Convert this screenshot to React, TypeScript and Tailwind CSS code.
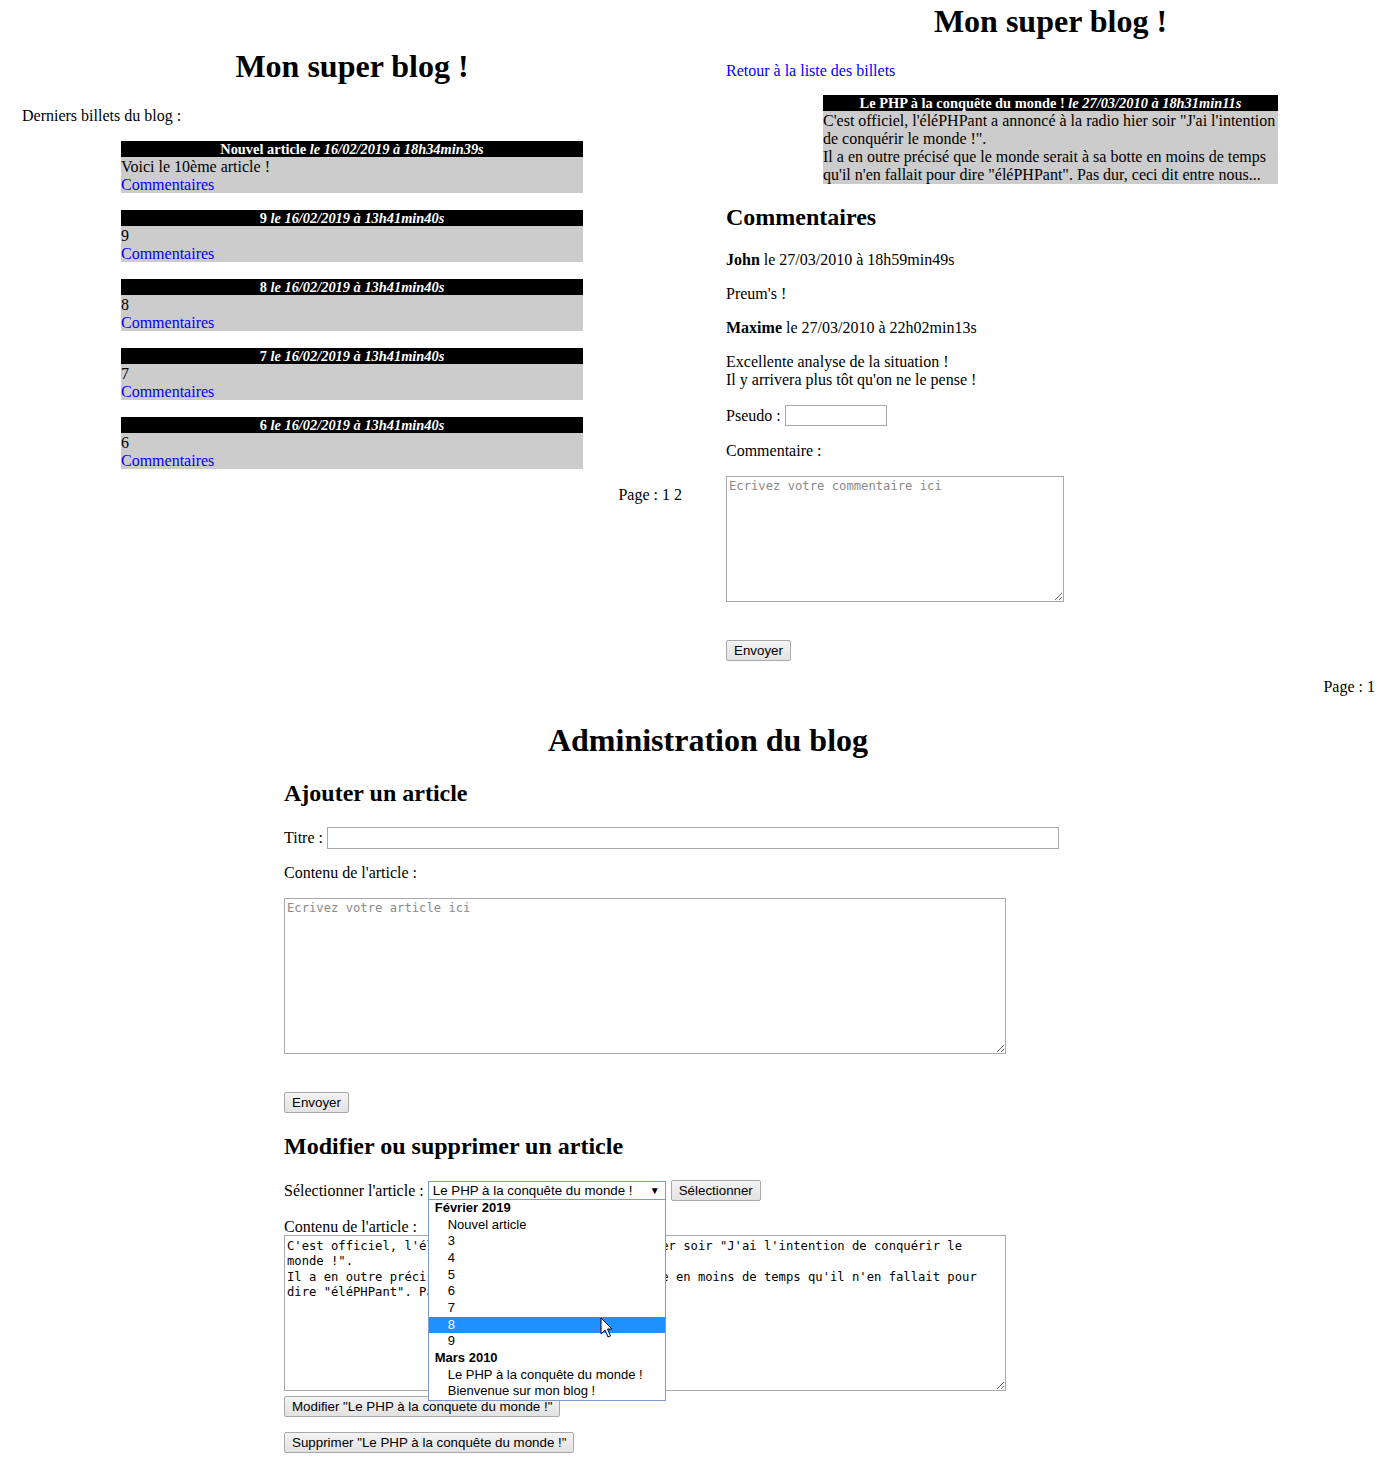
import React from 'react';

// Blog list, single article and admin pages shown side by side
const billets = [
  { title: 'Nouvel article', date: '16/02/2019 à 18h34min39s', content: 'Voici le 10ème article !' },
  { title: '9', date: '16/02/2019 à 13h41min40s', content: '9' },
  { title: '8', date: '16/02/2019 à 13h41min40s', content: '8' },
  { title: '7', date: '16/02/2019 à 13h41min40s', content: '7' },
  { title: '6', date: '16/02/2019 à 13h41min40s', content: '6' },
];

const options = [
  { label: 'Février 2019', group: true },
  { label: 'Nouvel article' },
  { label: '3' },
  { label: '4' },
  { label: '5' },
  { label: '6' },
  { label: '7' },
  { label: '8', active: true },
  { label: '9' },
  { label: 'Mars 2010', group: true },
  { label: 'Le PHP à la conquête du monde !' },
  { label: 'Bienvenue sur mon blog !' },
];

const articleText =
  'C\'est officiel, l\'éléPHPant a annoncé à la radio hier soir "J\'ai l\'intention de conquérir le\nmonde !".\nIl a en outre précisé que le monde serait à sa botte en moins de temps qu\'il n\'en fallait pour\ndire "éléPHPant". Pas dur, ceci dit entre nous...';

const btn =
  "h-[21px] px-[7px] border border-[#a9a9a9] rounded-[2px] bg-gradient-to-b from-[#f4f4f4] to-[#e2e2e2] text-[13.33px] leading-[19px] text-black font-['Liberation_Sans',Arial,sans-serif]";

const area =
  "block border border-[#a9a9a9] bg-white p-[2px] text-[12.2px] leading-[15.3px] text-black placeholder:text-[#8a8a8a] font-['DejaVu_Sans_Mono',monospace] outline-none";

function Cursor() {
  return (
    <svg className="absolute left-[172px] top-[136px]" width="13" height="21" viewBox="0 0 13 21">
      <path d="M1 1 L1 17 L5 13 L8 20 L10.5 19 L7.5 12 L12 12 Z" fill="#fff" stroke="#000" strokeWidth="1" strokeLinejoin="round" />
    </svg>
  );
}

export default function App() {
  return (
    <div className="w-[1389px] min-h-[1467px] bg-white text-black text-[16px] font-['Liberation_Serif','Times_New_Roman',serif]">
      <div className="flex">
        {/* Liste des billets */}
        <div className="w-[704px] px-[22px]">
          <h1 className="mt-[48px] text-center text-[32px] font-bold leading-[37px]">Mon super blog !</h1>
          <p className="mt-[22px] leading-[18px]">Derniers billets du blog :</p>
          <div className="mt-[16px]">
            {billets.map((b, i) => (
              <div key={i} className="mx-auto mb-[17px] w-[462px]">
                <h3 className="h-[16px] bg-black text-center text-[14.4px] font-bold leading-[16px] text-white">
                  {b.title} <em>le {b.date}</em>
                </h3>
                <div className="h-[36px] bg-[#cccccc] pt-[1px] leading-[18px]">
                  <p>{b.content}</p>
                  <a href="#" className="text-[#0000ff]">Commentaires</a>
                </div>
              </div>
            ))}
          </div>
          <p className="text-right leading-[18px]">Page : 1 2</p>
        </div>

        {/* Billet + commentaires */}
        <div className="ml-[8px] w-[677px] px-[14px]">
          <h1 className="mt-[3px] text-center text-[32px] font-bold leading-[37px]">Mon super blog !</h1>
          <p className="mt-[22px] leading-[18px]">
            <a href="#" className="text-[#0000ff]">Retour à la liste des billets</a>
          </p>
          <div className="mx-auto mt-[15px] w-[455px]">
            <h3 className="h-[16px] bg-black text-center text-[14.4px] font-bold leading-[16px] text-white">
              Le PHP à la conquête du monde ! <em>le 27/03/2010 à 18h31min11s</em>
            </h3>
            <p className="h-[73px] bg-[#cccccc] pt-[1px] leading-[18px]">
              C'est officiel, l'éléPHPant a annoncé à la radio hier soir "J'ai l'intention de conquérir le monde !".
              <br />
              Il a en outre précisé que le monde serait à sa botte en moins de temps qu'il n'en fallait pour dire
              "éléPHPant". Pas dur, ceci dit entre nous...
            </p>
          </div>
          <h2 className="mt-[19px] text-[24px] font-bold leading-[28px]">Commentaires</h2>
          <p className="mt-[20px] leading-[18px]">
            <strong>John</strong> le 27/03/2010 à 18h59min49s
          </p>
          <p className="mt-[16px] leading-[18px]">Preum's !</p>
          <p className="mt-[16px] leading-[18px]">
            <strong>Maxime</strong> le 27/03/2010 à 22h02min13s
          </p>
          <p className="mt-[16px] leading-[18px]">
            Excellente analyse de la situation !
            <br />
            Il y arrivera plus tôt qu'on ne le pense !
          </p>
          <div className="mt-[16px] flex h-[21px] items-center gap-[4px]">
            <span>Pseudo :</span>
            <input type="text" className="h-[21px] w-[102px] border border-[#a9a9a9] bg-white" />
          </div>
          <p className="mt-[16px] leading-[18px]">Commentaire :</p>
          <textarea className={`${area} mt-[16px] h-[126px] w-[338px]`} placeholder="Ecrivez votre commentaire ici" />
          <button className={`${btn} mt-[38px]`}>Envoyer</button>
          <p className="mt-[16px] text-right leading-[18px]">Page : 1</p>
        </div>
      </div>

      {/* Administration */}
      <div className="ml-[284px] w-[848px] pb-[14px]">
        <h1 className="mt-[26px] text-center text-[32px] font-bold leading-[37px]">Administration du blog</h1>
        <h2 className="mt-[20px] text-[24px] font-bold leading-[28px]">Ajouter un article</h2>
        <div className="mt-[20px] flex h-[22px] items-center gap-[4px]">
          <span>Titre :</span>
          <input type="text" className="h-[22px] w-[732px] border border-[#a9a9a9] bg-white" />
        </div>
        <p className="mt-[15px] leading-[18px]">Contenu de l'article :</p>
        <textarea className={`${area} mt-[16px] h-[156px] w-[722px]`} placeholder="Ecrivez votre article ici" />
        <button className={`${btn} mt-[38px]`}>Envoyer</button>

        <h2 className="mt-[18px] text-[24px] font-bold leading-[28px]">Modifier ou supprimer un article</h2>
        <div className="mt-[20px] flex h-[21px] items-center">
          <span className="mr-[4px]">Sélectionner l'article :</span>
          <div className="relative z-10">
            <div className="flex h-[19px] w-[238px] items-center justify-between border border-[#7a9cd3] bg-white pl-[4px] pr-[5px] text-[13.33px] font-['Liberation_Sans',Arial,sans-serif]">
              <span>Le PHP à la conquête du monde !</span>
              <span className="text-[10px]">▼</span>
            </div>
            <ul className="absolute left-0 top-[18px] w-[238px] border border-[#7a9cd3] bg-white text-[13px] font-['Liberation_Sans',Arial,sans-serif]">
              {options.map((o, i) => (
                <li
                  key={i}
                  className={`h-[16.67px] leading-[16.67px] ${o.group ? 'pl-[6px] font-bold' : 'pl-[19px]'} ${o.active ? 'bg-[#1e90ff] text-white' : ''}`}
                >
                  {o.label}
                </li>
              ))}
            </ul>
            <Cursor />
          </div>
          <button className={`${btn} ml-[5px]`}>Sélectionner</button>
        </div>
        <p className="mt-[17px] leading-[18px]">Contenu de l'article :</p>
        <textarea className={`${area} -mt-[1px] h-[156px] w-[722px] pt-[3px]`} defaultValue={articleText} />
        <button className={`${btn} mt-[5px] block`}>Modifier "Le PHP à la conquete du monde !"</button>
        <button className={`${btn} mt-[15px] block`}>Supprimer "Le PHP à la conquête du monde !"</button>
      </div>
    </div>
  );
}
